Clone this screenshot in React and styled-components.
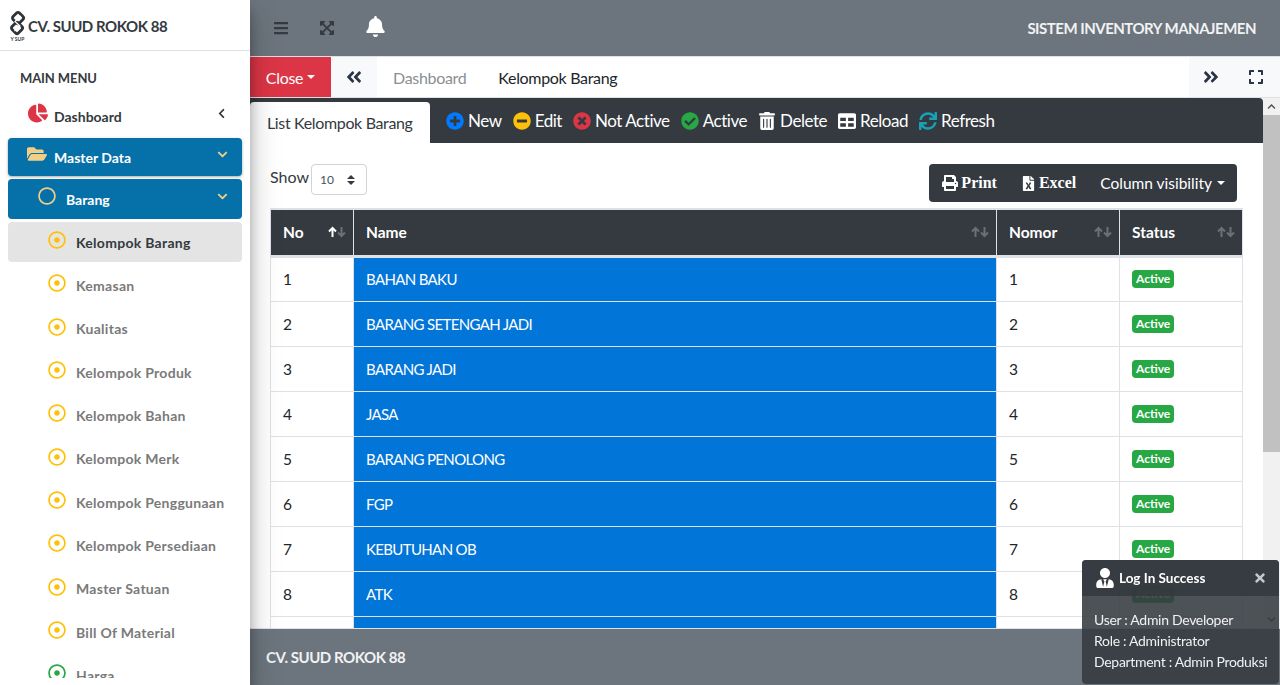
import React from "react";
import styled, { createGlobalStyle } from "styled-components";
import {
	FaAngleDoubleLeft,
	FaAngleDoubleRight,
	FaBars,
	FaBell,
	FaChartPie,
	FaCheckCircle,
	FaChevronDown,
	FaChevronLeft,
	FaChevronUp,
	FaExpand,
	FaExpandArrowsAlt,
	FaFileExcel,
	FaFolderOpen,
	FaMinusCircle,
	FaPlusCircle,
	FaPrint,
	FaRegCircle,
	FaRegDotCircle,
	FaSync,
	FaTable,
	FaTimes,
	FaTimesCircle,
	FaTrashAlt,
	FaUserTie,
} from "react-icons/fa";

const subMenu = [
	{ label: "Kelompok Barang", active: true },
	{ label: "Kemasan" },
	{ label: "Kualitas" },
	{ label: "Kelompok Produk" },
	{ label: "Kelompok Bahan" },
	{ label: "Kelompok Merk" },
	{ label: "Kelompok Penggunaan" },
	{ label: "Kelompok Persediaan" },
	{ label: "Master Satuan" },
	{ label: "Bill Of Material" },
	{ label: "Harga", color: "#28a745" },
];

const rows = [
	["1", "BAHAN BAKU"],
	["2", "BARANG SETENGAH JADI"],
	["3", "BARANG JADI"],
	["4", "JASA"],
	["5", "BARANG PENOLONG"],
	["6", "FGP"],
	["7", "KEBUTUHAN OB"],
	["8", "ATK"],
	["9", ""],
];

const actions = [
	{ label: "New", Icon: FaPlusCircle, color: "#007bff" },
	{ label: "Edit", Icon: FaMinusCircle, color: "#ffc107" },
	{ label: "Not Active", Icon: FaTimesCircle, color: "#dc3545" },
	{ label: "Active", Icon: FaCheckCircle, color: "#28a745" },
	{ label: "Delete", Icon: FaTrashAlt, color: "#fff" },
	{ label: "Reload", Icon: FaTable, color: "#fff" },
	{ label: "Refresh", Icon: FaSync, color: "#17a2b8" },
];

const Logo = () => (
	<LogoBox>
		<svg width="17" height="27" viewBox="0 0 17 27">
			<g fill="none" stroke="#2f3338" strokeWidth="2.8">
				<rect x="4.5" y="3.5" width="9" height="9" rx="2" transform="rotate(45 9 8)" />
				<rect x="3.5" y="13.5" width="9" height="9" rx="2" transform="rotate(45 8 18)" />
			</g>
			<path d="M12 6 L6 11.5 L11 16 L5.5 21" fill="none" stroke="#fff" strokeWidth="1.2" />
		</svg>
		<LogoText>Y SUP</LogoText>
	</LogoBox>
);

const SortArrows = ({ up }) => (
	<Sort width="18" height="12" viewBox="0 0 18 12">
		<g fill="none" strokeWidth="2">
			<path d="M4.5 11 V2 M1 5.5 L4.5 2 L8 5.5" stroke={up ? "#fff" : "#6b7075"} />
			<path d="M13.5 1 V10 M10 6.5 L13.5 10 L17 6.5" stroke="#6b7075" />
		</g>
	</Sort>
);

export default function App() {
	return (
		<Page>
			<GlobalStyle />
			<Sidebar>
				<Brand>
					<Logo />
					<BrandName>CV. SUUD ROKOK 88</BrandName>
				</Brand>
				<Nav>
					<NavTitle>MAIN MENU</NavTitle>
					<DashboardRow>
						<FaChartPie size={20} color="#dc3545" />
						<span>Dashboard</span>
						<FaChevronLeft size={11} />
					</DashboardRow>
					<OpenItem $raised>
						<FaFolderOpen size={20} color="#f3cf86" />
						<span>Master Data</span>
						<FaChevronDown size={11} color="#f3cf86" />
					</OpenItem>
					<OpenItem $sub>
						<FaRegCircle size={18} color="#f3cf86" />
						<span>Barang</span>
						<FaChevronDown size={11} color="#f3cf86" />
					</OpenItem>
					{subMenu.map(item => (
						<LeafItem key={item.label} $active={item.active}>
							<FaRegDotCircle size={18} color={item.color || "#ffc107"} />
							<span>{item.label}</span>
						</LeafItem>
					))}
				</Nav>
			</Sidebar>
			<Main>
				<Header>
					<HeaderIcons>
						<FaBars size={16} color="#343a40" />
						<FaExpandArrowsAlt size={16} color="#343a40" />
						<FaBell size={21} color="#fff" />
					</HeaderIcons>
					<HeaderTitle>SISTEM INVENTORY MANAJEMEN</HeaderTitle>
				</Header>
				<TabBar>
					<CloseButton>
						Close
						<Caret />
					</CloseButton>
					<ScrollTab>
						<FaAngleDoubleLeft size={18} />
					</ScrollTab>
					<PageTab>Dashboard</PageTab>
					<PageTab $current>Kelompok Barang</PageTab>
					<TabTools>
						<FaAngleDoubleRight size={18} />
						<FaExpand size={16} />
					</TabTools>
				</TabBar>
				<Body>
					<Panel>
						<PanelBar>
							<ActiveTab>List Kelompok Barang</ActiveTab>
							<Actions>
								{actions.map(({ label, Icon, color }) => (
									<Action key={label}>
										<Icon size={18} color={color} />
										{label}
									</Action>
								))}
							</Actions>
						</PanelBar>
						<PanelBody>
							<Controls>
								<ShowLength>
									Show
									<LengthSelect>
										10
										<SelectArrows>
											<span />
											<span />
										</SelectArrows>
									</LengthSelect>
								</ShowLength>
								<ExportGroup>
									<ExportButton>
										<FaPrint size={16} />
										Print
									</ExportButton>
									<ExportButton>
										<FaFileExcel size={15} />
										Excel
									</ExportButton>
									<VisibilityButton>
										Column visibility
										<Caret />
									</VisibilityButton>
								</ExportGroup>
							</Controls>
							<Table>
								<colgroup>
									<col width="83" />
									<col width="643" />
									<col width="123" />
									<col width="123" />
								</colgroup>
								<thead>
									<tr>
										<HeadCell>
											No
											<SortArrows up />
										</HeadCell>
										<HeadCell>
											Name
											<SortArrows />
										</HeadCell>
										<HeadCell>
											Nomor
											<SortArrows />
										</HeadCell>
										<HeadCell>
											Status
											<SortArrows />
										</HeadCell>
									</tr>
								</thead>
								<tbody>
									{rows.map(([no, name]) => (
										<tr key={no}>
											<Cell>{no}</Cell>
											<NameCell>{name}</NameCell>
											<Cell>{no}</Cell>
											<Cell>
												<Badge>Active</Badge>
											</Cell>
										</tr>
									))}
								</tbody>
							</Table>
						</PanelBody>
					</Panel>
					<Scrollbar>
						<ScrollArrow>
							<FaChevronUp size={9} />
						</ScrollArrow>
						<ScrollThumb />
						<ScrollTrack />
						<ScrollArrow>
							<FaChevronDown size={9} />
						</ScrollArrow>
					</Scrollbar>
				</Body>
				<Footer>CV. SUUD ROKOK 88</Footer>
			</Main>
			<Toast>
				<ToastHead>
					<FaUserTie size={20} color="#fff" />
					<ToastTitle>Log In Success</ToastTitle>
					<FaTimes size={14} color="#c4c6c9" />
				</ToastHead>
				<ToastBody>
					<div>User : Admin Developer</div>
					<div>Role : Administrator</div>
					<div>Department : Admin Produksi</div>
				</ToastBody>
			</Toast>
		</Page>
	);
}

const GlobalStyle = createGlobalStyle`
	html, body {
		margin: 0;
		height: 100%;
		overflow: hidden;
		background: #fff;
	}
	body {
		font-family: "Lato", "Liberation Sans", sans-serif;
		font-size: 16px;
		color: #212529;
	}
	* {
		box-sizing: border-box;
	}
`;

const Page = styled.div`
	display: flex;
	height: 685px;
	overflow: hidden;
`;

const Sidebar = styled.aside`
	width: 250px;
	flex: none;
	height: 100%;
	background: #fff;
	position: relative;
	z-index: 2;
	box-shadow: 0 14px 28px rgba(0, 0, 0, 0.25), 0 10px 10px rgba(0, 0, 0, 0.22);
`;

const Brand = styled.div`
	display: flex;
	align-items: flex-start;
	height: 51px;
	padding: 10px 0 0 9px;
	gap: 2px;
	border-bottom: 1px solid #dee2e6;
`;

const LogoBox = styled.div`
	display: flex;
	flex-direction: column;
	align-items: center;
	width: 17px;
`;

const LogoText = styled.span`
	font-size: 5px;
	font-weight: 700;
	line-height: 5px;
	white-space: nowrap;
	color: #343a40;
`;

const BrandName = styled.div`
	font-size: 15px;
	font-weight: 700;
	line-height: 32px;
	letter-spacing: -0.45px;
	color: #343a40;
	white-space: nowrap;
`;

const Nav = styled.nav`
	height: 627px;
	overflow: hidden;
	padding: 0 8px;
`;

const NavTitle = styled.div`
	font-size: 13px;
	font-weight: 700;
	letter-spacing: -0.1px;
	color: #343a40;
	padding: 19px 0 0 12px;
	height: 46px;
	line-height: 16px;
`;

const NavRow = styled.div`
	display: flex;
	align-items: center;
	font-size: 14px;
	font-weight: 700;
	white-space: nowrap;

	span {
		flex: 1;
	}
	svg {
		margin-top: -4px;
	}
`;

const DashboardRow = styled(NavRow)`
	height: 41px;
	padding: 0 15px 3px 20px;
	gap: 6px;
	color: #343a40;

	svg {
		margin-top: -6px;
	}
`;

const OpenItem = styled(NavRow)`
	height: ${({ $raised }) => ($raised ? 38 : 40)}px;
	margin-bottom: 3px;
	padding: 0 14px 0 ${({ $sub }) => ($sub ? 30 : 19)}px;
	gap: ${({ $sub }) => ($sub ? 10 : 7)}px;
	background: #0670a8;
	color: #fff;
	border-radius: 4px;
	box-shadow: ${({ $raised }) => ($raised ? "0 1px 3px rgba(0, 0, 0, 0.35)" : "none")};

	svg {
		margin-top: -6px;
	}
`;

const LeafItem = styled(NavRow)`
	height: 40px;
	margin-bottom: 3.35px;
	padding-left: 40px;
	gap: 10px;
	letter-spacing: 0.28px;
	border-radius: 4px;
	color: ${({ $active }) => ($active ? "#343a40" : "#7a7a7a")};
	background: ${({ $active }) => ($active ? "#e4e4e4" : "transparent")};
`;

const Main = styled.div`
	flex: 1;
	min-width: 0;
	display: flex;
	flex-direction: column;
`;

const Header = styled.header`
	display: flex;
	align-items: center;
	justify-content: space-between;
	height: 57px;
	flex: none;
	background: #6c757d;
	border-bottom: 1px solid #dee2e6;
	padding: 0 24px 1px 23px;
`;

const HeaderIcons = styled.div`
	display: flex;
	align-items: center;
	gap: 30px;

	svg:last-child {
		margin-top: -3px;
	}
`;

const HeaderTitle = styled.div`
	font-size: 15px;
	font-weight: 700;
	letter-spacing: -0.5px;
	color: #f1f2f3;
`;

const TabBar = styled.div`
	display: flex;
	align-items: stretch;
	height: 41px;
	flex: none;
	background: #fff;
	border-bottom: 1px solid #dee2e6;
	letter-spacing: -0.32px;
`;

const CloseButton = styled.div`
	display: flex;
	align-items: center;
	justify-content: center;
	gap: 4px;
	width: 81px;
	background: #dc3545;
	color: #fff;
`;

const Caret = styled.i`
	display: inline-block;
	width: 0;
	height: 0;
	border-top: 4.5px solid currentColor;
	border-left: 4.5px solid transparent;
	border-right: 4.5px solid transparent;
`;

const ScrollTab = styled.div`
	display: flex;
	align-items: center;
	justify-content: center;
	width: 46px;
	background: #f8f9fa;
	color: #2b3445;
`;

const PageTab = styled.div`
	display: flex;
	align-items: center;
	padding: 0 16px;
	color: ${({ $current }) => ($current ? "#212529" : "#8a8f94")};
`;

const TabTools = styled.div`
	display: flex;
	align-items: center;
	gap: 28px;
	margin-left: auto;
	width: 91px;
	padding-left: 13px;
	background: #f8f9fa;
	color: #2b3445;
`;

const Body = styled.div`
	flex: 1;
	min-height: 0;
	display: flex;
	overflow: hidden;
`;

const Panel = styled.section`
	flex: 1;
	min-width: 0;
`;

const PanelBar = styled.div`
	display: flex;
	align-items: flex-end;
	height: 45px;
	background: #343a40;
	border-top-right-radius: 4px;
`;

const ActiveTab = styled.div`
	display: flex;
	align-items: center;
	width: 180px;
	height: 41px;
	padding-left: 17px;
	background: #fff;
	color: #343a40;
	letter-spacing: -0.35px;
	border-radius: 4px 4px 0 0;
`;

const Actions = styled.div`
	display: flex;
	align-items: center;
	gap: 11px;
	height: 45px;
	padding: 0 0 0 16px;
	color: #fff;
	font-size: 17px;
	letter-spacing: -0.45px;
`;

const Action = styled.div`
	display: flex;
	align-items: center;
	gap: 4px;
	white-space: nowrap;
`;

const PanelBody = styled.div`
	padding: 21px 20px 0;
`;

const Controls = styled.div`
	display: flex;
	justify-content: space-between;
	align-items: flex-start;
	height: 44px;
	padding-right: 6px;
`;

const ShowLength = styled.div`
	display: flex;
	align-items: flex-start;
	gap: 2px;
	line-height: 26px;
	color: #343a40;
`;

const LengthSelect = styled.div`
	display: flex;
	align-items: center;
	justify-content: space-between;
	width: 56px;
	height: 31px;
	padding: 0 11px 0 8px;
	border: 1px solid #ced4da;
	border-radius: 4px;
	font-size: 12px;
	color: #495057;
`;

const SelectArrows = styled.div`
	display: flex;
	flex-direction: column;
	gap: 2px;

	span {
		width: 0;
		height: 0;
		border-left: 4px solid transparent;
		border-right: 4px solid transparent;
	}
	span:first-child {
		border-bottom: 4px solid #343a40;
	}
	span:last-child {
		border-top: 4px solid #343a40;
	}
`;

const ExportGroup = styled.div`
	display: flex;
	align-items: center;
	height: 38px;
	padding: 0 12px 0 13px;
	background: #343a40;
	border-radius: 4px;
	color: #fff;
`;

const ExportButton = styled.div`
	display: flex;
	align-items: center;
	gap: 3px;
	margin-right: 24px;
	font-family: "Liberation Serif", serif;
	font-size: 16px;
	font-weight: 700;
`;

const VisibilityButton = styled.div`
	display: flex;
	align-items: center;
	gap: 5px;
	font-size: 15.5px;
`;

const Table = styled.table`
	width: 973px;
	table-layout: fixed;
	border-collapse: collapse;
	border-top: 2px solid #dee2e6;
`;

const HeadCell = styled.th`
	position: relative;
	height: 47px;
	padding: 0 12px;
	text-align: left;
	font-size: 15.5px;
	font-weight: 700;
	color: #fff;
	background: #343a40;
	border: 1px solid #dee2e6;
	border-top: 0;
	border-bottom: 3px solid #dee2e6;
`;

const Sort = styled.svg`
	position: absolute;
	right: 7px;
	top: 16px;
`;

const Cell = styled.td`
	height: 45px;
	padding: 0 12px;
	font-size: 15.5px;
	color: #212529;
	background: #fff;
	border: 1px solid #dee2e6;
`;

const NameCell = styled(Cell)`
	font-size: 15px;
	letter-spacing: -0.65px;
	color: #fff;
	background: #0275d8;
`;

const Badge = styled.span`
	display: inline-block;
	padding: 0 4px;
	height: 18px;
	line-height: 18px;
	font-size: 12px;
	font-weight: 700;
	color: #fff;
	background: #28a745;
	border-radius: 4px;
	vertical-align: 2px;
`;

const Scrollbar = styled.div`
	display: flex;
	flex-direction: column;
	width: 17px;
	flex: none;
	background: #f1f1f1;
`;

const ScrollArrow = styled.div`
	display: flex;
	align-items: center;
	justify-content: center;
	height: 17px;
	flex: none;
	color: #505050;
`;

const ScrollThumb = styled.div`
	height: 337px;
	flex: none;
	background: #c1c1c1;
`;

const ScrollTrack = styled.div`
	flex: 1;
`;

const Footer = styled.footer`
	display: flex;
	align-items: center;
	height: 57px;
	flex: none;
	padding: 0 0 1px 16px;
	background: #6c757d;
	border-top: 1px solid #dee2e6;
	font-size: 15px;
	font-weight: 700;
	letter-spacing: -0.45px;
	color: #f1f2f3;
`;

const Toast = styled.div`
	position: fixed;
	right: 1px;
	bottom: 1px;
	z-index: 5;
	width: 197px;
	height: 124px;
	border-radius: 4px;
	background: rgba(52, 58, 64, 0.88);
	color: #fff;
	overflow: hidden;
`;

const ToastHead = styled.div`
	display: flex;
	align-items: center;
	gap: 4px;
	height: 36px;
	padding: 0 12px 0 13px;
	background: rgba(52, 58, 64, 0.85);
`;

const ToastTitle = styled.div`
	flex: 1;
	font-size: 13.5px;
	font-weight: 700;
`;

const ToastBody = styled.div`
	padding: 13px 12px 0;
	font-size: 14px;
	line-height: 21px;
	letter-spacing: -0.3px;
	white-space: nowrap;
	color: #f0f1f2;
`;
